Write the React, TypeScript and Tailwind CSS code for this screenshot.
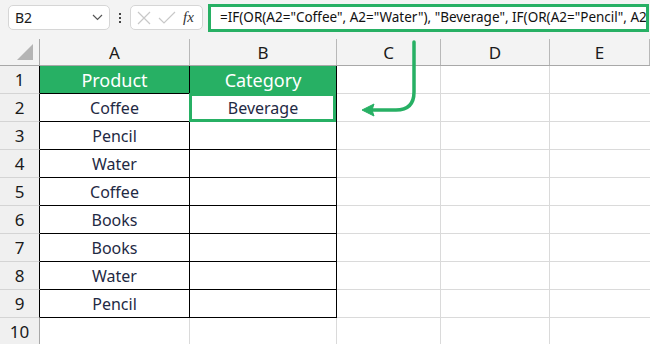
import React from "react";

const GREEN = "#27b064";

const cols = [
  { key: "A", w: "w-[150px]" },
  { key: "B", w: "w-[147px]" },
  { key: "C", w: "w-[104px]" },
  { key: "D", w: "w-[109px]" },
  { key: "E", w: "flex-1" },
];

const data: [string, string][] = [
  ["Product", "Category"],
  ["Coffee", "Beverage"],
  ["Pencil", ""],
  ["Water", ""],
  ["Coffee", ""],
  ["Books", ""],
  ["Books", ""],
  ["Water", ""],
  ["Pencil", ""],
  ["", ""],
];

export default function App() {
  return (
    <div
      className="relative w-[650px] h-[344px] overflow-hidden bg-[#f3f3f3] text-[#1a1a1a]"
      style={{ fontFamily: '"Noto Sans", "Open Sans", sans-serif' }}
    >
      {/* top bar */}
      <div className="flex items-start h-[39px] pl-[8px] pt-[4px]">
        <div className="mt-[1px] flex items-center justify-between w-[102px] h-[25px] bg-white border border-[#d6d6d6] rounded-[5px] pl-[6px] pr-[6px]">
          <span className="text-[14px] leading-none">B2</span>
          <svg width="11" height="7" viewBox="0 0 11 7">
            <path d="M1 1 L5.5 5.5 L10 1" fill="none" stroke="#555" strokeWidth="1.2" />
          </svg>
        </div>
        <div className="mt-[1px] w-[20px] h-[25px] flex flex-col items-center justify-center gap-[2px]">
          <div className="w-[2px] h-[2px] bg-[#444]" />
          <div className="w-[2px] h-[2px] bg-[#444]" />
          <div className="w-[2px] h-[2px] bg-[#444]" />
        </div>
        <div className="mt-[1px] flex items-center w-[73px] h-[25px] bg-white border border-[#d6d6d6] rounded-[5px] pl-[6px]">
          <svg width="14" height="14" viewBox="0 0 14 14">
            <path d="M1 1 L13 13 M13 1 L1 13" stroke="#c8c8c8" strokeWidth="1.2" />
          </svg>
          <svg width="18" height="14" viewBox="0 0 18 14" className="ml-[7px]">
            <path d="M1 7 L6 12 L17 1" fill="none" stroke="#c8c8c8" strokeWidth="1.2" />
          </svg>
          <span
            className="ml-[7px] text-[15px] italic leading-none text-[#333]"
            style={{ fontFamily: '"Liberation Serif", serif' }}
          >
            fx
          </span>
        </div>
        <div
          className="ml-[5px] w-[441px] h-[28px] bg-white border-[3px] flex items-center pl-[9px] overflow-hidden whitespace-nowrap"
          style={{ borderColor: GREEN }}
        >
          <span className="text-[13.5px] leading-none text-[#111]">
            =IF(OR(A2="Coffee", A2="Water"), "Beverage", IF(OR(A2="Pencil", A2
          </span>
        </div>
      </div>

      {/* column headers */}
      <div className="flex h-[27px] border-b border-[#a8a8a8]">
        <div className="relative w-[40px] border-r border-[#a8a8a8]">
          <svg width="20" height="20" viewBox="0 0 20 20" className="absolute right-[4px] bottom-[3px]">
            <path d="M18 2 L18 18 L2 18 Z" fill="#b4b4b4" />
          </svg>
        </div>
        {cols.map((c) => (
          <div
            key={c.key}
            className={`${c.w} flex items-center justify-center border-r border-[#b8b8b8] text-[17px] leading-none`}
          >
            {c.key}
          </div>
        ))}
      </div>

      {/* rows */}
      {data.map((row, i) => {
        const r = i + 1;
        const inTable = r <= 9;
        const isHead = r === 1;
        return (
          <div key={r} className="flex h-[28px]">
            <div
              className={`w-[40px] flex items-center justify-center bg-[#f0f0f0] border-b border-[#d4d4d4] border-r text-[17px] leading-none ${
                inTable ? "border-r-black" : "border-r-[#a8a8a8]"
              }`}
            >
              {r}
            </div>
            {/* A */}
            <div
              className={`w-[150px] flex items-center justify-center border-r border-b ${
                inTable ? "border-black" : "border-[#dadada]"
              } ${isHead ? "text-white text-[18px]" : "text-[#1f2a44] text-[16px]"} leading-none`}
              style={isHead ? { backgroundColor: GREEN } : { backgroundColor: "#fff" }}
            >
              {row[0]}
            </div>
            {/* B */}
            <div
              className={`relative w-[147px] flex items-center justify-center border-r border-b ${
                inTable ? "border-black" : "border-[#dadada]"
              } ${isHead ? "text-white text-[18px]" : "text-[#1f2a44] text-[16px]"} leading-none`}
              style={isHead ? { backgroundColor: GREEN } : { backgroundColor: "#fff" }}
            >
              {row[1]}
              {r === 2 && (
                <div
                  className="absolute top-[-1px] left-[-1px] right-[0px] bottom-[-1px] border-[3px]"
                  style={{ borderColor: GREEN }}
                />
              )}
            </div>
            <div className="w-[104px] bg-white border-r border-b border-[#dadada]" />
            <div className="w-[109px] bg-white border-r border-b border-[#dadada]" />
            <div className="flex-1 bg-white border-b border-[#dadada]" />
          </div>
        );
      })}

      {/* arrow */}
      <svg
        className="absolute left-0 top-0 pointer-events-none"
        width="650"
        height="344"
        viewBox="0 0 650 344"
      >
        <path
          d="M414 42 L414 92 Q414 110 396 110 L372 110"
          fill="none"
          stroke={GREEN}
          strokeWidth="3.5"
          strokeLinecap="round"
        />
        <path d="M362 110 L374 104 L372 110 L374 116 Z" fill={GREEN} stroke={GREEN} strokeWidth="1" strokeLinejoin="round" />
      </svg>
    </div>
  );
}
